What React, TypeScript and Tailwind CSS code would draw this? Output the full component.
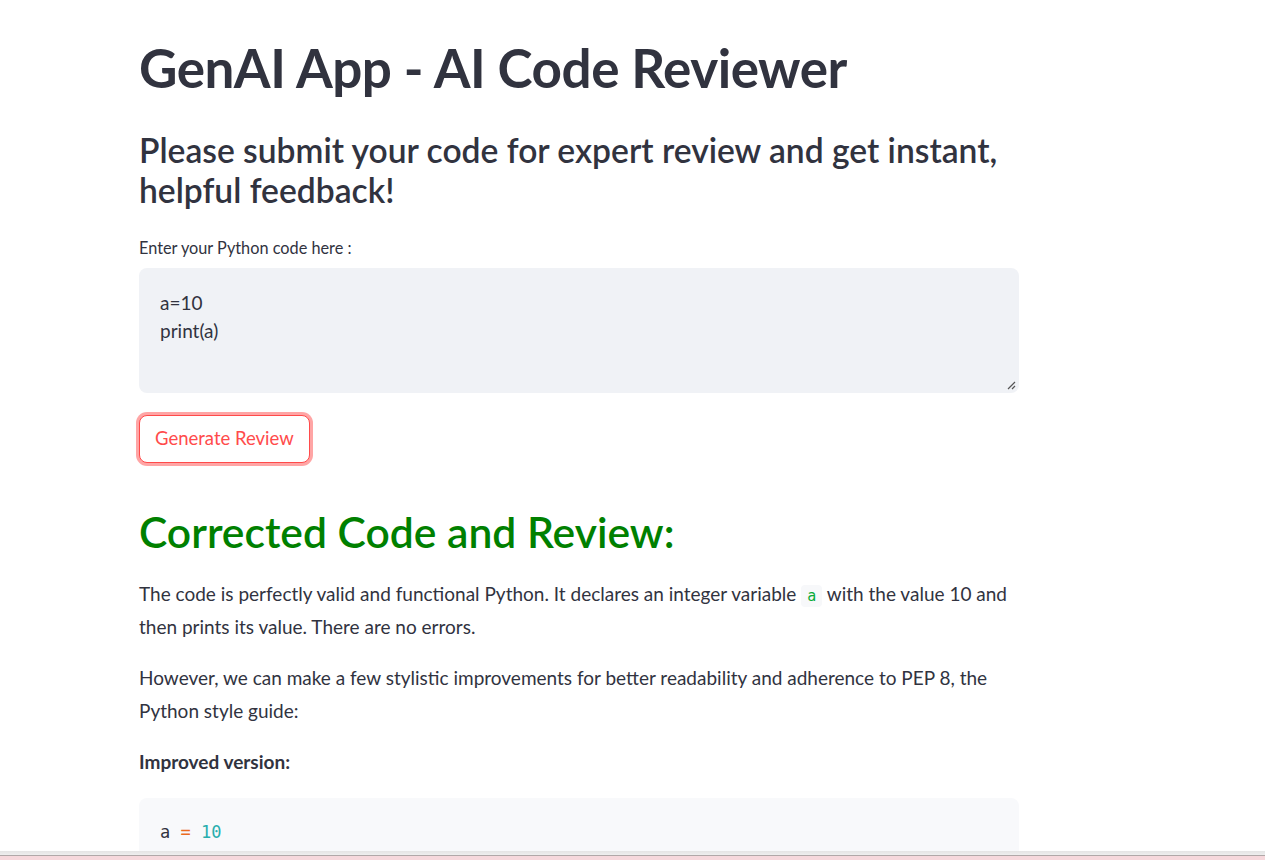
import React from "react";

const sans = { fontFamily: '"Lato", "Noto Sans", sans-serif' };
const mono = { fontFamily: '"DejaVu Sans Mono", monospace' };

export default function App() {
  return (
    <div className="min-h-[860px] bg-white text-[#31333f]" style={sans}>
      <div className="ml-[139px] w-[880px] pt-[36px]">
        <h1 className="text-[53px] font-bold leading-[64px] tracking-[-0.5px]">
          GenAI App - AI Code Reviewer
        </h1>
        <h2 className="mt-[30px] text-[33.6px] font-semibold leading-[40px]">
          Please submit your code for expert review and get instant,
          <br />
          helpful feedback!
        </h2>
        <label className="mt-[28px] block text-[16.3px] leading-[20px]">Enter your Python code here :</label>
        <div className="relative mt-[10px] h-[125px] rounded-lg bg-[#f0f2f6] px-[21px] pt-[21px] text-[19px] leading-[28px]">
          <div>a=10</div>
          <div>print(a)</div>
          <svg className="absolute bottom-[3px] right-[3px]" width="9" height="9" viewBox="0 0 9 9">
            <path d="M8 1L1 8M8 5L5 8" stroke="#555" strokeWidth="1.2" />
          </svg>
        </div>
        <button className="mt-[22px] h-[48px] rounded-lg border border-[#ff4b4b] bg-white px-[15px] text-[18.5px] text-[#ff4b4b] shadow-[0_0_0_3px_rgba(255,75,75,0.5)]">
          Generate Review
        </button>
        <h2 className="mt-[42px] text-[42.6px] font-semibold leading-[54px] text-[#008000]">
          Corrected Code and Review:
        </h2>
        <p className="mt-[18px] text-[19px] leading-[33px]">
          The code is perfectly valid and functional Python. It declares an integer variable{" "}
          <code className="rounded bg-[#f7f8fa] px-[6px] py-[2px] text-[15px] leading-[16px] text-[#09ab3b]" style={mono}>
            a
          </code>{" "}
          with the value 10 and
          <br />
          then prints its value. There are no errors.
        </p>
        <p className="mt-[18px] text-[19px] leading-[33px]">
          However, we can make a few stylistic improvements for better readability and adherence to PEP 8, the
          <br />
          Python style guide:
        </p>
        <p className="mt-[18px] text-[19px] font-bold leading-[33px]">Improved version:</p>
        <div className="mt-[20px] h-[120px] rounded-lg bg-[#f8f9fb] px-[21px] pt-[22px] text-[17px] leading-[24px]" style={mono}>
          <span className="text-[#31333f]">a</span> <span className="text-[#ea6b1f]">=</span>{" "}
          <span className="text-[#28aeae]">10</span>
        </div>
      </div>
      <div className="fixed bottom-0 left-0 right-0 h-[9px]">
        <div className="h-[4px] bg-gradient-to-b from-[#e4e4e4] to-[#efefef]" />
        <div className="h-[1px] bg-[#b0a8a8]" />
        <div className="h-[4px] bg-[#f6d8dc]" />
      </div>
    </div>
  );
}
